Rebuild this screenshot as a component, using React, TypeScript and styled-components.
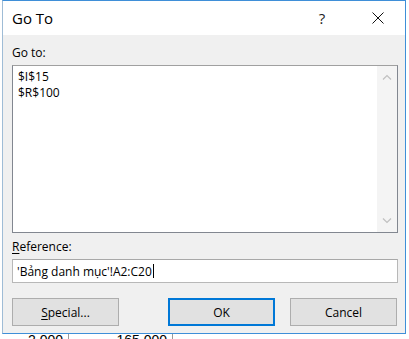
import React from 'react';
import styled, { createGlobalStyle } from 'styled-components';

const GlobalStyle = createGlobalStyle`
  html, body {
    margin: 0;
    padding: 0;
    background: #ffffff;
    overflow: hidden;
  }
  body {
    width: 409px;
    height: 339px;
    font-family: "Open Sans", "Noto Sans", sans-serif;
  }
`;

const Page = styled.div`
  width: 409px;
  height: 339px;
  overflow: hidden;
`;

const Dialog = styled.div`
  margin-left: 2px;
  width: 404px;
  height: 334px;
  box-sizing: border-box;
  border: 1px solid #3f8fd8;
  border-left-color: #9fbcd6;
  background: #f0f0f0;
  display: flex;
  flex-direction: column;
`;

const TitleBar = styled.div`
  height: 34px;
  background: #ffffff;
  display: flex;
  align-items: center;
  padding-left: 9px;
  color: #000;
`;

const Title = styled.div`
  flex: 1;
  font-size: 15px;
  margin-top: -1px;
`;

const Help = styled.div`
  width: 14px;
  font-size: 15px;
  color: #222;
  text-align: center;
  margin-right: 43px;
`;

const Close = styled.div`
  width: 12px;
  height: 12px;
  display: flex;
  margin-right: 21px;
`;

const Body = styled.div`
  flex: 1;
  padding: 10px 7px 0 9px;
  display: flex;
  flex-direction: column;
`;

const Label = styled.div<{ $gap?: number }>`
  font-size: 12px;
  line-height: 16px;
  color: #000;
  margin-top: ${(p) => p.$gap ?? 0}px;
  margin-bottom: 4px;
  u {
    text-decoration: underline;
    text-underline-offset: 2px;
  }
`;

const ListBox = styled.div`
  height: 168px;
  box-sizing: border-box;
  border: 1px solid #828790;
  border-top-color: #a0a0a0;
  background: #fff;
  display: flex;
`;

const Items = styled.div`
  flex: 1;
  padding: 3px 0 0 5px;
  font-size: 12px;
  line-height: 16px;
  color: #000;
`;

const Scrollbar = styled.div`
  width: 20px;
  background: #f4f4f4;
  display: flex;
  flex-direction: column;
  justify-content: space-between;
  align-items: center;
  padding: 8px 0 8px;
`;

const Input = styled.div`
  height: 24px;
  box-sizing: border-box;
  border: 1px solid #b8b8b8;
  border-top-color: #a8a8a8;
  background: #fff;
  display: flex;
  align-items: center;
  padding-left: 4px;
  font-size: 12px;
  color: #000;
`;

const Caret = styled.span`
  display: inline-block;
  width: 1px;
  height: 14px;
  background: #000;
  margin-left: 1px;
`;

const ButtonRow = styled.div`
  display: flex;
  gap: 15px;
  margin-top: 15px;
  padding-right: 1px;
`;

const Button = styled.div<{ $primary?: boolean; $push?: boolean }>`
  width: 107px;
  height: 28px;
  box-sizing: border-box;
  background: #e1e1e1;
  border: ${(p) => (p.$primary ? '2px solid #0078d7' : '1px solid #adadad')};
  display: flex;
  align-items: center;
  justify-content: center;
  font-size: 12px;
  color: #000;
  margin-left: ${(p) => (p.$push ? 'auto' : '0')};
  u {
    text-decoration: underline;
    text-underline-offset: 2px;
  }
`;

const Sheet = styled.div`
  display: flex;
  height: 5px;
  font-family: "Liberation Sans", Arial, sans-serif;
  font-size: 14px;
  line-height: 12px;
  color: #000;
`;

const Cell = styled.div<{ $w: number }>`
  width: ${(p) => p.$w}px;
  box-sizing: border-box;
  border-right: 1px solid #9a9a9a;
  text-align: right;
  padding-right: 5px;
`;

const Chevron = ({ up }: { up?: boolean }) => (
  <svg width="10" height="6" viewBox="0 0 10 6">
    <path
      d={up ? 'M1 5.5 L5 1.5 L9 5.5' : 'M1 0.5 L5 4.5 L9 0.5'}
      fill="none"
      stroke="#c0c0c0"
      strokeWidth="1.2"
    />
  </svg>
);

const App = () => (
  <Page>
    <GlobalStyle />
    <Dialog>
      <TitleBar>
        <Title>Go To</Title>
        <Help>?</Help>
        <Close>
          <svg width="12" height="12" viewBox="0 0 12 12">
            <path d="M0.5 0.5 L11.5 11.5 M11.5 0.5 L0.5 11.5" stroke="#111" strokeWidth="1" />
          </svg>
        </Close>
      </TitleBar>
      <Body>
        <Label>Go to:</Label>
        <ListBox>
          <Items>
            <div>$I$15</div>
            <div>$R$100</div>
          </Items>
          <Scrollbar>
            <Chevron up />
            <Chevron />
          </Scrollbar>
        </ListBox>
        <Label $gap={6}>
          <u>R</u>eference:
        </Label>
        <Input>
          'Bảng danh mục'!A2:C20
          <Caret />
        </Input>
        <ButtonRow>
          <Button>
            <u>S</u>pecial...
          </Button>
          <Button $primary $push>
            OK
          </Button>
          <Button>Cancel</Button>
        </ButtonRow>
      </Body>
    </Dialog>
    <Sheet>
      <Cell $w={69}>2,000</Cell>
      <Cell $w={104}>165,000</Cell>
    </Sheet>
  </Page>
);

export default App;
